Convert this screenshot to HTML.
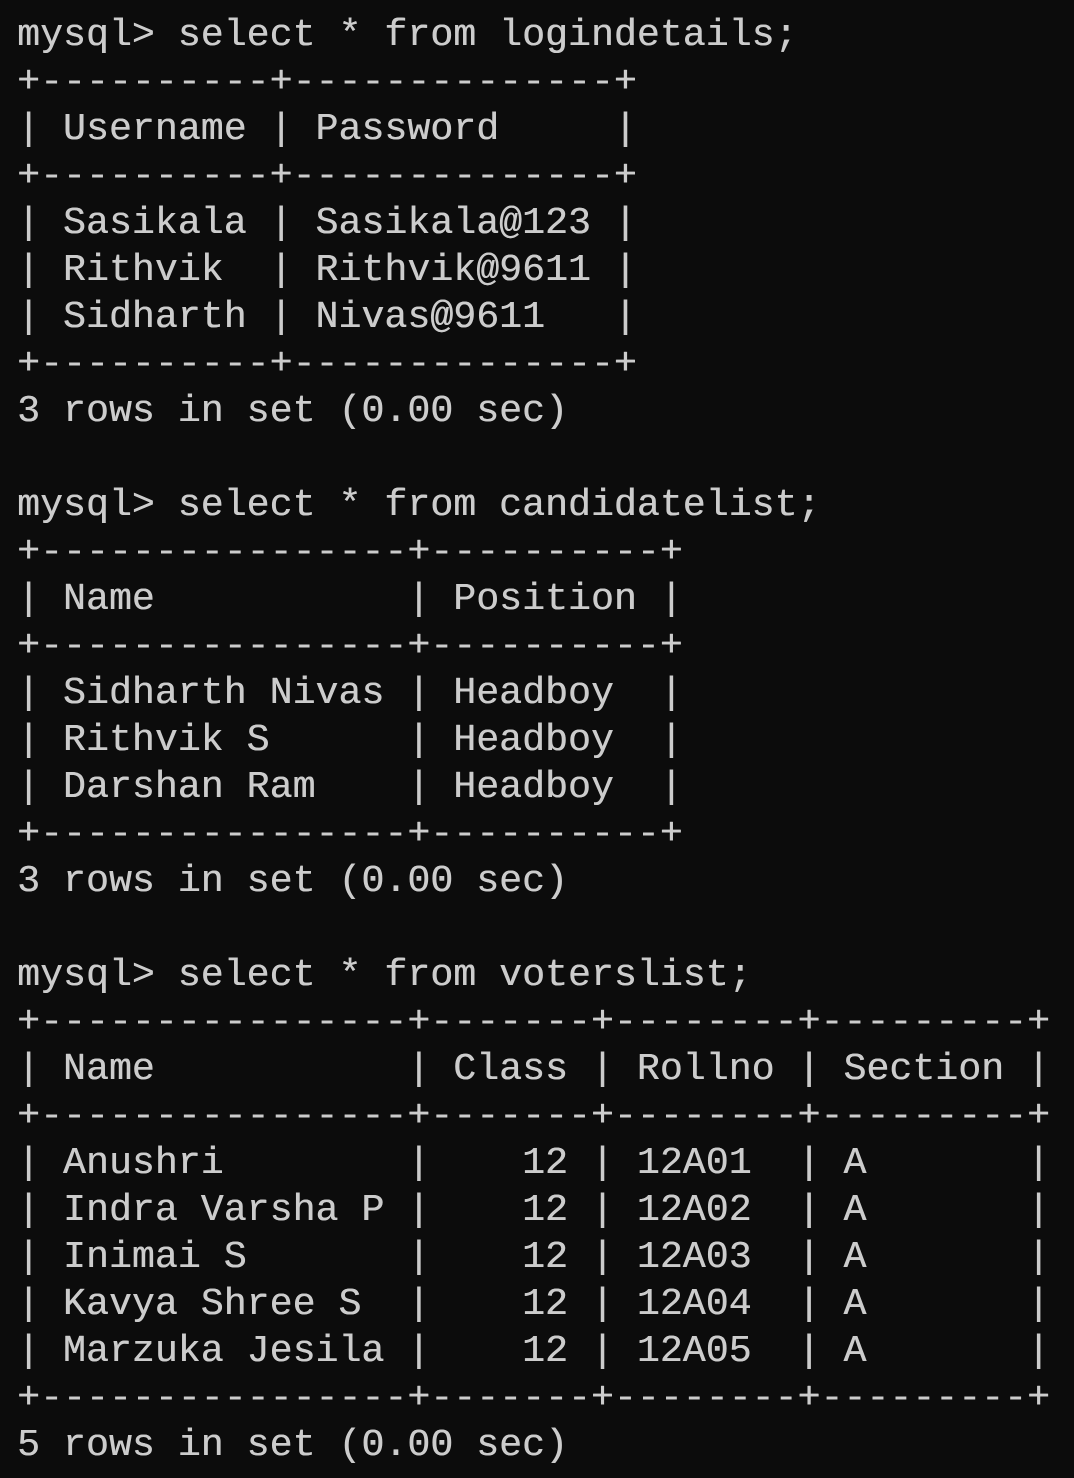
<!DOCTYPE html>
<html><head><meta charset="utf-8"><style>
html,body{margin:0;padding:0;background:#0c0c0c;width:1074px;height:1478px;overflow:hidden}
pre{margin:0;padding:12px 0 0 17px;font-family:"Liberation Mono",monospace;font-size:38.25px;line-height:47px;color:#cccccc;white-space:pre;text-shadow:0.4px 0 0 #cccccc}
</style></head><body><pre>mysql&gt; select * from logindetails;
+----------+--------------+
| Username | Password     |
+----------+--------------+
| Sasikala | Sasikala@123 |
| Rithvik  | Rithvik@9611 |
| Sidharth | Nivas@9611   |
+----------+--------------+
3 rows in set (0.00 sec)

mysql&gt; select * from candidatelist;
+----------------+----------+
| Name           | Position |
+----------------+----------+
| Sidharth Nivas | Headboy  |
| Rithvik S      | Headboy  |
| Darshan Ram    | Headboy  |
+----------------+----------+
3 rows in set (0.00 sec)

mysql&gt; select * from voterslist;
+----------------+-------+--------+---------+
| Name           | Class | Rollno | Section |
+----------------+-------+--------+---------+
| Anushri        |    12 | 12A01  | A       |
| Indra Varsha P |    12 | 12A02  | A       |
| Inimai S       |    12 | 12A03  | A       |
| Kavya Shree S  |    12 | 12A04  | A       |
| Marzuka Jesila |    12 | 12A05  | A       |
+----------------+-------+--------+---------+
5 rows in set (0.00 sec)</pre></body></html>
